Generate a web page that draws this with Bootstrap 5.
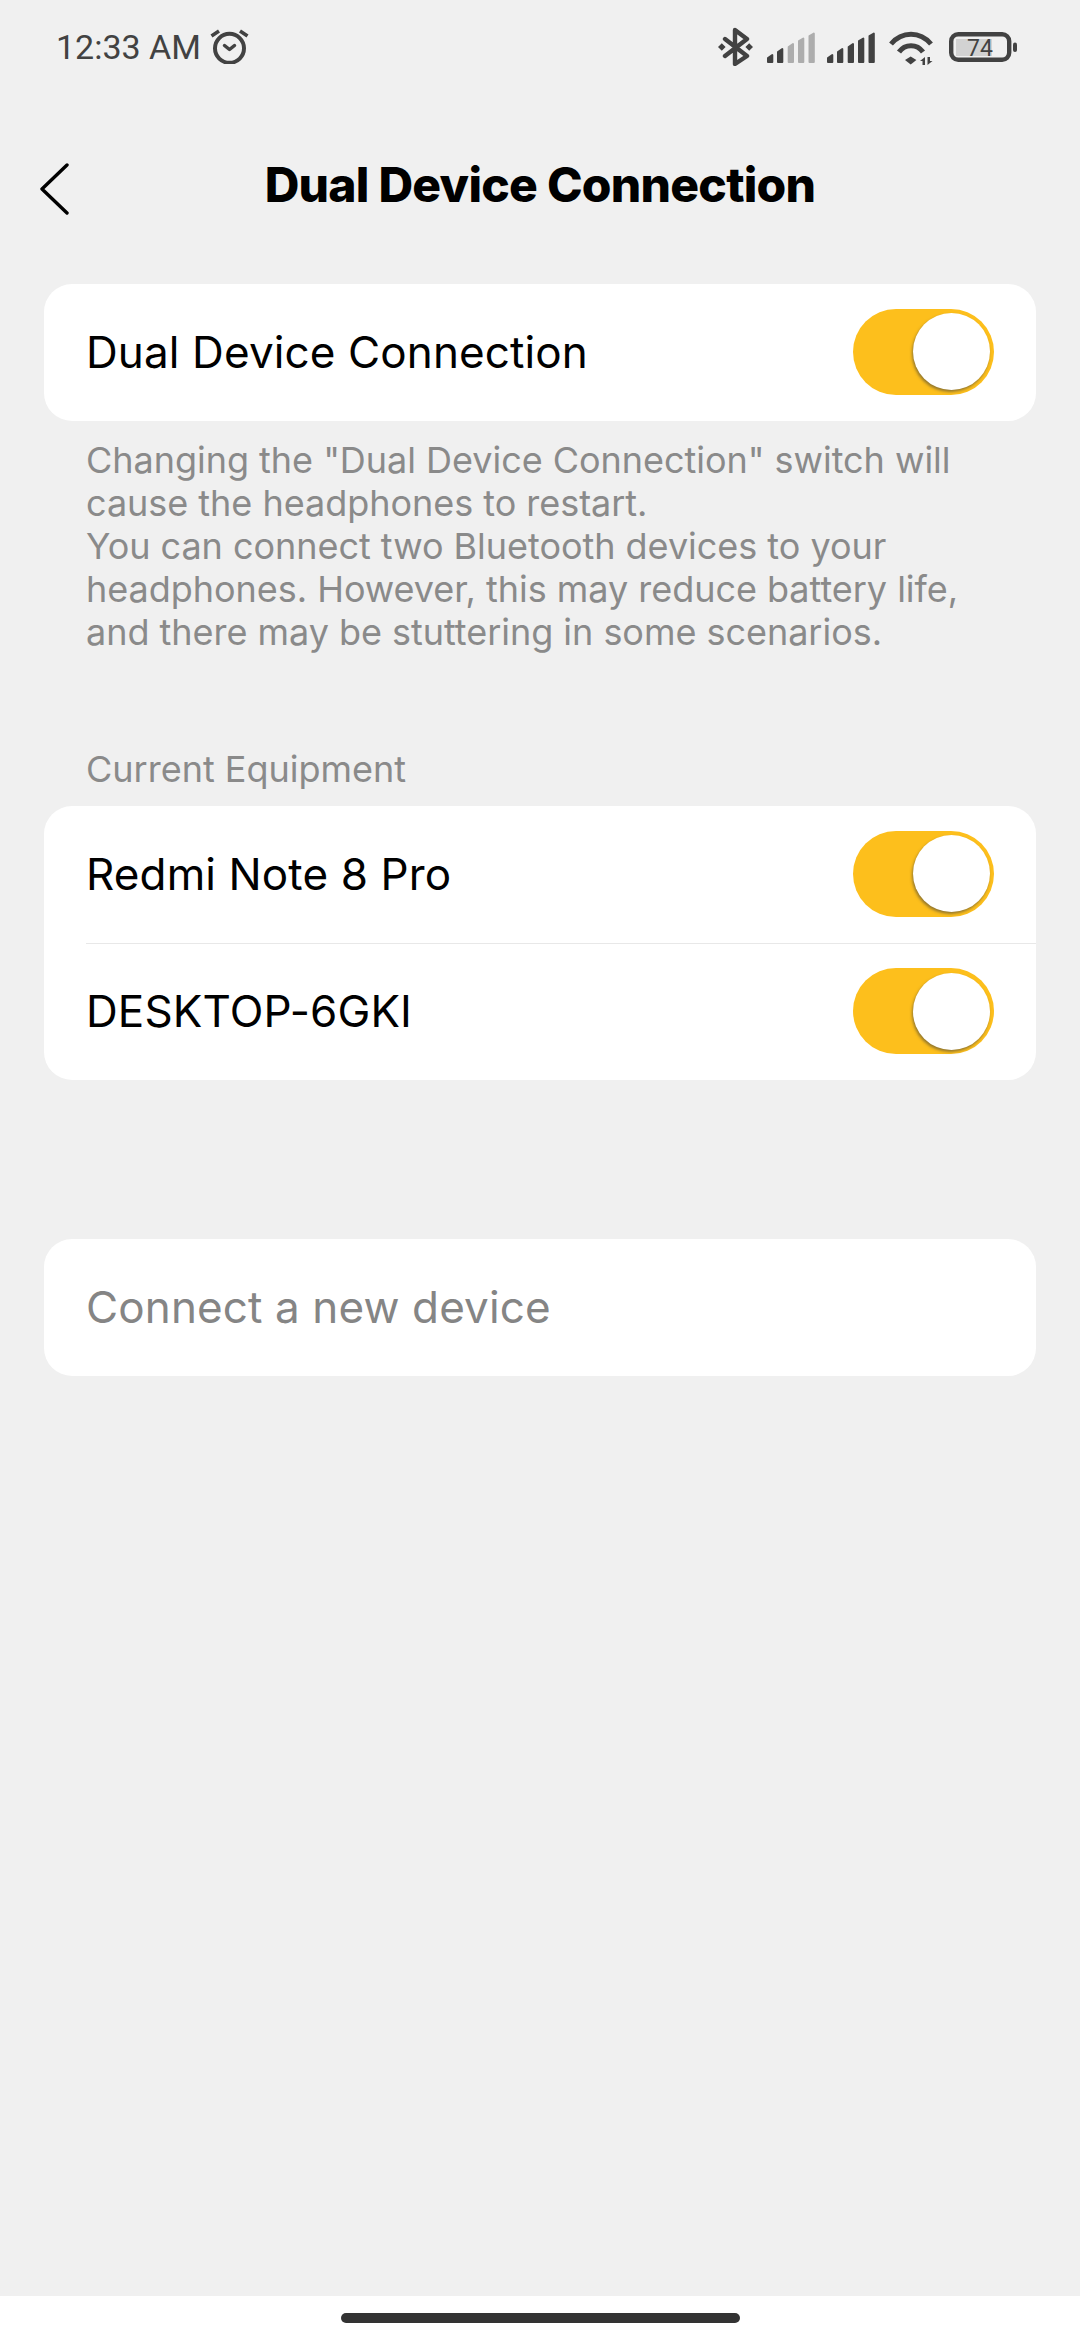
<!DOCTYPE html>
<html lang="en">
<head>
    <meta charset="UTF-8">
    <meta name="viewport" content="width=device-width, initial-scale=1.0">
    <title>Dual Device Connection</title>
    <link rel="stylesheet" href="https://cdn.jsdelivr.net/npm/bootstrap@5.3.0/dist/css/bootstrap.min.css">
    <style>
        html, body { width: 1080px; height: 2340px; overflow: hidden; }
        body { background: #f0f0f0; font-family: "Inter", "Liberation Sans", sans-serif; color: #000; }
        .screen { height: 2340px; }
        .status-bar { height: 94px; padding: 27px 63px 0 56px; color: #424242; }
        .status-time { font-family: "Roboto", "Liberation Sans", sans-serif; font-size: 34px; line-height: 40px; margin-right: 9px; }
        .alarm-icon { margin-top: -2px; }
        .signal-one { margin: 5px 0 0 14px; }
        .signal-two { margin: 5px 0 0 12px; }
        .wifi-icon { margin: 4px 0 0 13px; }
        .battery-icon { margin: 5px 0 0 15px; }
        .title-bar { height: 90px; margin-top: 46px; padding: 0 40px; }
        .title-text { font-size: 48px; font-weight: 800; line-height: 90px; letter-spacing: -.75px; }
        .back-btn { left: 40px; top: 23px; }
        .panel { background: #fff; border-radius: 28px; margin: 54px 44px 0; overflow: hidden; }
        .panel-row { height: 137px; padding: 0 42px 2px 42px; font-size: 44px; letter-spacing: .12px; }
        .panel-row + .panel-row { border-top: 1px solid #e8e8e8; margin-left: 42px; padding-left: 0; }
        .hint { margin: 18px 60px 0 86px; font-size: 36px; line-height: 43px; color: #8a8a8a; letter-spacing: -.03px; }
        .section-label { margin: 94px 86px 15px; font-size: 36px; line-height: 43px; color: #8a8a8a; }
        .section-label + .panel { margin-top: 0; }
        .panel-gap { margin-top: 159px; }
        .toggle-track { width: 141px; height: 86px; border-radius: 43px; background: #fdbf1c; padding: 0 4px; }
        .toggle-knob { width: 77px; height: 77px; border-radius: 50%; background: #fff; box-shadow: -1px 2px 3px rgba(60, 60, 60, .55); }
        .muted-row { color: #858585; }
        .home-area { height: 44px; background: #fff; }
        .home-bar { width: 399px; height: 10px; border-radius: 5px; background: #333; margin-top: 17px; }
    </style>
</head>
<body>
    <div class="screen d-flex flex-column">
        <div class="status-bar d-flex justify-content-between align-items-start">
            <div class="d-flex align-items-center">
                <span class="status-time">12:33 AM</span>
                <svg class="alarm-icon" width="39" height="36" viewBox="0 0 39 36" fill="none" stroke="#424242">
                    <circle cx="19.5" cy="20.3" r="14.5" stroke-width="4"/>
                    <path d="M14.5 17.5l5 4 5-4" stroke-width="3.5" stroke-linecap="round" stroke-linejoin="round"/>
                    <path d="M1.5 8L9 3M37.500 8L30 3" stroke-width="3.6"/>
                </svg>
            </div>
            <div class="d-flex align-items-start">
                <svg width="35" height="39" viewBox="0 0 35 39" fill="none" stroke="#424242" stroke-width="4.4" stroke-linejoin="round" stroke-linecap="round">
                    <path d="M7 12l22 17-12 8V3l12 9L7 29"/>
                    <path d="M0 20l3.800-3.800 3.800 3.800-3.800 3.800zM27.400 20l3.800-3.800 3.800 3.800-3.800 3.800z" fill="#424242" stroke="none"/>
                </svg>
                <svg class="signal-one" width="48" height="32" viewBox="0 0 48 32" stroke-width="2" stroke-linejoin="round">
                    <path d="M1 30v-4l4.300-3v7zM11 30v-10l4.300-3v13z" fill="#424242" stroke="#424242"/>
                    <path d="M21.700 30v-15l4.300-3v18zM32 30v-21l4.300-2.500v23.500zM42.500 30v-26l4.300-2.500v28.500z" fill="#adadad" stroke="#adadad"/>
                </svg>
                <svg class="signal-two" width="48" height="32" viewBox="0 0 48 32" stroke-width="2" stroke-linejoin="round">
                    <path d="M1 30v-4l4.300-3v7zM11 30v-10l4.300-3v13zM21.700 30v-15l4.300-3v18zM32 30v-21l4.300-2.500v23.500zM42.500 30v-26l4.300-2.500v28.500z" fill="#424242" stroke="#424242"/>
                </svg>
                <svg class="wifi-icon" width="46" height="35" viewBox="0 0 46 35" fill="none" stroke="#424242" stroke-width="5">
                    <path d="M3 13C14 0 32 0 43 13"/>
                    <path d="M11 21C17 12.500 29 12.500 35 21"/>
                    <path d="M17 29L22.700 25.500 28.400 29 22.700 33.500z" fill="#424242" stroke="none"/>
                    <path d="M37 26V34H34.500V30H32zM39.500 34V26H42V30H44.500z" fill="#424242" stroke="none"/>
                </svg>
                <svg class="battery-icon" width="68" height="30" viewBox="0 0 68 30">
                    <rect x="2.200" y="2.200" width="58" height="25.600" rx="7" fill="none" stroke="#424242" stroke-width="4.400"/>
                    <rect x="7" y="7" width="36" height="17" fill="#d2d2d2"/>
                    <rect x="64" y="10.500" width="4" height="9.500" rx="2" fill="#424242"/>
                    <text x="31" y="24" text-anchor="middle" font-family="Roboto, sans-serif" font-size="23" fill="#424242">74</text>
                </svg>
            </div>
        </div>

        <div class="title-bar position-relative text-center">
            <svg class="back-btn position-absolute" width="29" height="52" viewBox="0 0 29 52" fill="none" stroke="#000" stroke-width="3.4" stroke-linecap="round" stroke-linejoin="round">
                <path d="M27 2L2 26l25 24"/>
            </svg>
            <div class="title-text">Dual Device Connection</div>
        </div>

        <div class="panel flex-shrink-0">
            <div class="panel-row d-flex align-items-center justify-content-between">
                <span>Dual Device Connection</span>
                <div class="toggle-track d-flex align-items-center justify-content-end"><div class="toggle-knob"></div></div>
            </div>
        </div>
        <p class="hint mb-0">Changing the "Dual Device Connection" switch will cause the headphones to restart.<br>You can connect two Bluetooth devices to your headphones. However, this may reduce battery life, and there may be stuttering in some scenarios.</p>

        <div class="section-label">Current Equipment</div>
        <div class="panel flex-shrink-0">
            <div class="panel-row d-flex align-items-center justify-content-between">
                <span>Redmi Note 8 Pro</span>
                <div class="toggle-track d-flex align-items-center justify-content-end"><div class="toggle-knob"></div></div>
            </div>
            <div class="panel-row d-flex align-items-center justify-content-between">
                <span>DESKTOP-6GKI</span>
                <div class="toggle-track d-flex align-items-center justify-content-end"><div class="toggle-knob"></div></div>
            </div>
        </div>

        <div class="panel panel-gap flex-shrink-0">
            <div class="panel-row muted-row d-flex align-items-center">Connect a new device</div>
        </div>

        <div class="flex-grow-1"></div>
        <div class="home-area d-flex justify-content-center flex-shrink-0"><div class="home-bar"></div></div>
    </div>
    <script src="https://cdn.jsdelivr.net/npm/bootstrap@5.3.0/dist/js/bootstrap.bundle.min.js"></script>
</body>
</html>
